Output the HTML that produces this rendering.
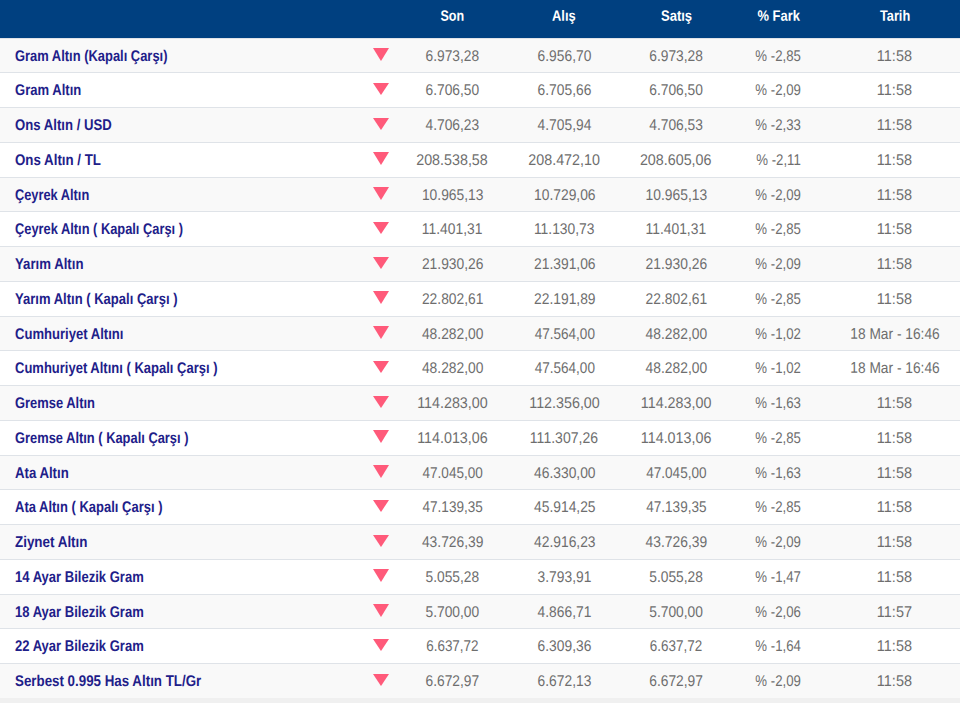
<!DOCTYPE html>
<html lang="tr">
<head>
<meta charset="utf-8">
<title>Altın Fiyatları</title>
<style>
  html, body { margin: 0; padding: 0; }
  body {
    width: 960px; height: 703px; overflow: hidden;
    background: #f0f0f0;
    font-family: "Liberation Sans", sans-serif;
  }
  table.gold {
    width: 960px; table-layout: fixed;
    border-collapse: separate; border-spacing: 0;
  }
  .gold th, .gold td {
    box-sizing: border-box; padding: 0; margin: 0;
    vertical-align: top; text-align: center;
    white-space: nowrap; overflow: visible;
  }
  .gold thead th {
    height: 38px; line-height: 20px;
    background: #004080; color: #fff;
    font-size: 15.0px; font-weight: 700;
  }
  .gold tbody td {
    height: 35px; line-height: 20px;
    border-top: 1px solid #dfe3e8;
    background: #ffffff;
    font-size: 15.5px; color: #6e6e6e;
  }
  .gold tbody tr.h34 td { height: 34px; }
  .gold tbody tr:nth-child(odd) td { background: #f9f9f9; }
  .gold tbody td.name {
    text-align: left; padding-left: 15.0px;
    font-size: 15.5px; font-weight: 700; color: #1e2089;
  }
  .gold span {
    display: inline-block; vertical-align: top;
    height: 20px; line-height: 20px; white-space: pre;
    transform: translate(var(--x, 0px), var(--y, 0px)) scaleX(var(--s, 1)) rotate(0.03deg);
  }
  .gold td.name span { transform-origin: 0 50%; --y: 7.00px; }
  .gold td.num span { --y: 6.90px; }
  .gold th span { --y: 5.65px; }
  .gold td.dir { position: relative; }
  .gold td.dir svg { position: absolute; left: 33px; display: block; width: 16px; }
  .gold td.dir svg polygon { fill: #ff5a7a; }
</style>
</head>
<body>
<table class="gold">
<colgroup><col style="width:340px"><col style="width:56px"><col style="width:112px"><col style="width:112px"><col style="width:112px"><col style="width:94px"><col style="width:134px"></colgroup>
<thead>
<tr>
<th></th>
<th></th>
<th><span style="--s:0.8362;--x:0.10px">Son</span></th>
<th><span style="--s:0.8613;--x:0.10px">Alış</span></th>
<th><span style="--s:0.8701;--x:0.60px">Satış</span></th>
<th><span style="--s:0.8617;--x:0.10px">% Fark</span></th>
<th><span style="--s:0.8520;--x:2.30px">Tarih</span></th>
</tr>
</thead>
<tbody>
<tr class="h34">
<td class="name"><span style="--s:0.8338">Gram Altın (Kapalı Çarşı)</span></td>
<td class="dir"><svg style="top:9px;height:13.05px" viewBox="0 0 16 13.05" preserveAspectRatio="none" aria-hidden="true"><polygon points="0,0 16,0 8,13.05"/></svg></td>
<td class="num"><span style="--s:0.8900;--x:0.20px">6.973,28</span></td>
<td class="num"><span style="--s:0.8900;--x:0.30px">6.956,70</span></td>
<td class="num"><span style="--s:0.8900;--x:-0.10px">6.973,28</span></td>
<td class="num"><span style="--s:0.8530;--x:-0.60px">% -2,85</span></td>
<td class="num"><span style="--s:0.9330;--x:1.60px">11:58</span></td>
</tr>
<tr>
<td class="name"><span style="--s:0.8421">Gram Altın</span></td>
<td class="dir"><svg style="top:10px;height:12.05px" viewBox="0 0 16 12.05" preserveAspectRatio="none" aria-hidden="true"><polygon points="0,0 16,0 8,12.05"/></svg></td>
<td class="num"><span style="--s:0.8900;--x:0.20px">6.706,50</span></td>
<td class="num"><span style="--s:0.8900;--x:0.30px">6.705,66</span></td>
<td class="num"><span style="--s:0.8900;--x:-0.10px">6.706,50</span></td>
<td class="num"><span style="--s:0.8530;--x:-0.60px">% -2,09</span></td>
<td class="num"><span style="--s:0.9330;--x:1.60px">11:58</span></td>
</tr>
<tr>
<td class="name"><span style="--s:0.8489">Ons Altın / USD</span></td>
<td class="dir"><svg style="top:10px;height:12.05px" viewBox="0 0 16 12.05" preserveAspectRatio="none" aria-hidden="true"><polygon points="0,0 16,0 8,12.05"/></svg></td>
<td class="num"><span style="--s:0.8900;--x:0.20px">4.706,23</span></td>
<td class="num"><span style="--s:0.8900;--x:0.30px">4.705,94</span></td>
<td class="num"><span style="--s:0.8900;--x:-0.10px">4.706,53</span></td>
<td class="num"><span style="--s:0.8530;--x:-0.60px">% -2,33</span></td>
<td class="num"><span style="--s:0.9330;--x:1.60px">11:58</span></td>
</tr>
<tr>
<td class="name"><span style="--s:0.8585">Ons Altın / TL</span></td>
<td class="dir"><svg style="top:9px;height:13.05px" viewBox="0 0 16 13.05" preserveAspectRatio="none" aria-hidden="true"><polygon points="0,0 16,0 8,13.05"/></svg></td>
<td class="num"><span style="--s:0.9230;--x:0.20px">208.538,58</span></td>
<td class="num"><span style="--s:0.9230;--x:0.30px">208.472,10</span></td>
<td class="num"><span style="--s:0.9230;--x:-0.10px">208.605,06</span></td>
<td class="num"><span style="--s:0.8530;--x:-0.60px">% -2,11</span></td>
<td class="num"><span style="--s:0.9330;--x:1.60px">11:58</span></td>
</tr>
<tr class="h34">
<td class="name"><span style="--s:0.8261">Çeyrek Altın</span></td>
<td class="dir"><svg style="top:9px;height:13.05px" viewBox="0 0 16 13.05" preserveAspectRatio="none" aria-hidden="true"><polygon points="0,0 16,0 8,13.05"/></svg></td>
<td class="num"><span style="--s:0.8930;--x:0.20px">10.965,13</span></td>
<td class="num"><span style="--s:0.8930;--x:0.30px">10.729,06</span></td>
<td class="num"><span style="--s:0.8930;--x:-0.10px">10.965,13</span></td>
<td class="num"><span style="--s:0.8530;--x:-0.60px">% -2,09</span></td>
<td class="num"><span style="--s:0.9330;--x:1.60px">11:58</span></td>
</tr>
<tr>
<td class="name"><span style="--s:0.8287">Çeyrek Altın ( Kapalı Çarşı )</span></td>
<td class="dir"><svg style="top:10px;height:12.05px" viewBox="0 0 16 12.05" preserveAspectRatio="none" aria-hidden="true"><polygon points="0,0 16,0 8,12.05"/></svg></td>
<td class="num"><span style="--s:0.8930;--x:0.20px">11.401,31</span></td>
<td class="num"><span style="--s:0.8930;--x:0.30px">11.130,73</span></td>
<td class="num"><span style="--s:0.8930;--x:-0.10px">11.401,31</span></td>
<td class="num"><span style="--s:0.8530;--x:-0.60px">% -2,85</span></td>
<td class="num"><span style="--s:0.9330;--x:1.60px">11:58</span></td>
</tr>
<tr>
<td class="name"><span style="--s:0.8519">Yarım Altın</span></td>
<td class="dir"><svg style="top:10px;height:12.05px" viewBox="0 0 16 12.05" preserveAspectRatio="none" aria-hidden="true"><polygon points="0,0 16,0 8,12.05"/></svg></td>
<td class="num"><span style="--s:0.8930;--x:0.20px">21.930,26</span></td>
<td class="num"><span style="--s:0.8930;--x:0.30px">21.391,06</span></td>
<td class="num"><span style="--s:0.8930;--x:-0.10px">21.930,26</span></td>
<td class="num"><span style="--s:0.8530;--x:-0.60px">% -2,09</span></td>
<td class="num"><span style="--s:0.9330;--x:1.60px">11:58</span></td>
</tr>
<tr>
<td class="name"><span style="--s:0.8409">Yarım Altın ( Kapalı Çarşı )</span></td>
<td class="dir"><svg style="top:9px;height:13.05px" viewBox="0 0 16 13.05" preserveAspectRatio="none" aria-hidden="true"><polygon points="0,0 16,0 8,13.05"/></svg></td>
<td class="num"><span style="--s:0.8930;--x:0.20px">22.802,61</span></td>
<td class="num"><span style="--s:0.8930;--x:0.30px">22.191,89</span></td>
<td class="num"><span style="--s:0.8930;--x:-0.10px">22.802,61</span></td>
<td class="num"><span style="--s:0.8530;--x:-0.60px">% -2,85</span></td>
<td class="num"><span style="--s:0.9330;--x:1.60px">11:58</span></td>
</tr>
<tr class="h34">
<td class="name"><span style="--s:0.8436">Cumhuriyet Altını</span></td>
<td class="dir"><svg style="top:9px;height:13.05px" viewBox="0 0 16 13.05" preserveAspectRatio="none" aria-hidden="true"><polygon points="0,0 16,0 8,13.05"/></svg></td>
<td class="num"><span style="--s:0.8930;--x:0.20px">48.282,00</span></td>
<td class="num"><span style="--s:0.8742;--x:0.30px">47.564,00</span></td>
<td class="num"><span style="--s:0.8930;--x:-0.10px">48.282,00</span></td>
<td class="num"><span style="--s:0.8530;--x:-0.60px">% -1,02</span></td>
<td class="num"><span style="--s:0.8870;--x:1.60px">18 Mar - 16:46</span></td>
</tr>
<tr>
<td class="name"><span style="--s:0.8387">Cumhuriyet Altını ( Kapalı Çarşı )</span></td>
<td class="dir"><svg style="top:10px;height:12.05px" viewBox="0 0 16 12.05" preserveAspectRatio="none" aria-hidden="true"><polygon points="0,0 16,0 8,12.05"/></svg></td>
<td class="num"><span style="--s:0.8930;--x:0.20px">48.282,00</span></td>
<td class="num"><span style="--s:0.8742;--x:0.30px">47.564,00</span></td>
<td class="num"><span style="--s:0.8930;--x:-0.10px">48.282,00</span></td>
<td class="num"><span style="--s:0.8530;--x:-0.60px">% -1,02</span></td>
<td class="num"><span style="--s:0.8870;--x:1.60px">18 Mar - 16:46</span></td>
</tr>
<tr>
<td class="name"><span style="--s:0.8341">Gremse Altın</span></td>
<td class="dir"><svg style="top:10px;height:12.05px" viewBox="0 0 16 12.05" preserveAspectRatio="none" aria-hidden="true"><polygon points="0,0 16,0 8,12.05"/></svg></td>
<td class="num"><span style="--s:0.9230;--x:0.20px">114.283,00</span></td>
<td class="num"><span style="--s:0.9230;--x:0.30px">112.356,00</span></td>
<td class="num"><span style="--s:0.9230;--x:-0.10px">114.283,00</span></td>
<td class="num"><span style="--s:0.8530;--x:-0.60px">% -1,63</span></td>
<td class="num"><span style="--s:0.9330;--x:1.60px">11:58</span></td>
</tr>
<tr>
<td class="name"><span style="--s:0.8311">Gremse Altın ( Kapalı Çarşı )</span></td>
<td class="dir"><svg style="top:9px;height:13.05px" viewBox="0 0 16 13.05" preserveAspectRatio="none" aria-hidden="true"><polygon points="0,0 16,0 8,13.05"/></svg></td>
<td class="num"><span style="--s:0.9230;--x:0.20px">114.013,06</span></td>
<td class="num"><span style="--s:0.9057;--x:0.30px">111.307,26</span></td>
<td class="num"><span style="--s:0.9230;--x:-0.10px">114.013,06</span></td>
<td class="num"><span style="--s:0.8530;--x:-0.60px">% -2,85</span></td>
<td class="num"><span style="--s:0.9330;--x:1.60px">11:58</span></td>
</tr>
<tr class="h34">
<td class="name"><span style="--s:0.8511">Ata Altın</span></td>
<td class="dir"><svg style="top:9px;height:13.05px" viewBox="0 0 16 13.05" preserveAspectRatio="none" aria-hidden="true"><polygon points="0,0 16,0 8,13.05"/></svg></td>
<td class="num"><span style="--s:0.8742;--x:0.20px">47.045,00</span></td>
<td class="num"><span style="--s:0.8930;--x:0.30px">46.330,00</span></td>
<td class="num"><span style="--s:0.8742;--x:-0.10px">47.045,00</span></td>
<td class="num"><span style="--s:0.8530;--x:-0.60px">% -1,63</span></td>
<td class="num"><span style="--s:0.9330;--x:1.60px">11:58</span></td>
</tr>
<tr>
<td class="name"><span style="--s:0.8381">Ata Altın ( Kapalı Çarşı )</span></td>
<td class="dir"><svg style="top:10px;height:12.05px" viewBox="0 0 16 12.05" preserveAspectRatio="none" aria-hidden="true"><polygon points="0,0 16,0 8,12.05"/></svg></td>
<td class="num"><span style="--s:0.8742;--x:0.20px">47.139,35</span></td>
<td class="num"><span style="--s:0.8930;--x:0.30px">45.914,25</span></td>
<td class="num"><span style="--s:0.8742;--x:-0.10px">47.139,35</span></td>
<td class="num"><span style="--s:0.8530;--x:-0.60px">% -2,85</span></td>
<td class="num"><span style="--s:0.9330;--x:1.60px">11:58</span></td>
</tr>
<tr>
<td class="name"><span style="--s:0.8650">Ziynet Altın</span></td>
<td class="dir"><svg style="top:10px;height:12.05px" viewBox="0 0 16 12.05" preserveAspectRatio="none" aria-hidden="true"><polygon points="0,0 16,0 8,12.05"/></svg></td>
<td class="num"><span style="--s:0.8930;--x:0.20px">43.726,39</span></td>
<td class="num"><span style="--s:0.8930;--x:0.30px">42.916,23</span></td>
<td class="num"><span style="--s:0.8930;--x:-0.10px">43.726,39</span></td>
<td class="num"><span style="--s:0.8530;--x:-0.60px">% -2,09</span></td>
<td class="num"><span style="--s:0.9330;--x:1.60px">11:58</span></td>
</tr>
<tr>
<td class="name"><span style="--s:0.8411">14 Ayar Bilezik Gram</span></td>
<td class="dir"><svg style="top:9px;height:13.05px" viewBox="0 0 16 13.05" preserveAspectRatio="none" aria-hidden="true"><polygon points="0,0 16,0 8,13.05"/></svg></td>
<td class="num"><span style="--s:0.8900;--x:0.20px">5.055,28</span></td>
<td class="num"><span style="--s:0.8900;--x:0.30px">3.793,91</span></td>
<td class="num"><span style="--s:0.8900;--x:-0.10px">5.055,28</span></td>
<td class="num"><span style="--s:0.8530;--x:-0.60px">% -1,47</span></td>
<td class="num"><span style="--s:0.9330;--x:1.60px">11:58</span></td>
</tr>
<tr class="h34">
<td class="name"><span style="--s:0.8411">18 Ayar Bilezik Gram</span></td>
<td class="dir"><svg style="top:9px;height:13.05px" viewBox="0 0 16 13.05" preserveAspectRatio="none" aria-hidden="true"><polygon points="0,0 16,0 8,13.05"/></svg></td>
<td class="num"><span style="--s:0.8900;--x:0.20px">5.700,00</span></td>
<td class="num"><span style="--s:0.8900;--x:0.30px">4.866,71</span></td>
<td class="num"><span style="--s:0.8900;--x:-0.10px">5.700,00</span></td>
<td class="num"><span style="--s:0.8530;--x:-0.60px">% -2,06</span></td>
<td class="num"><span style="--s:0.9330;--x:1.60px">11:57</span></td>
</tr>
<tr>
<td class="name"><span style="--s:0.8411">22 Ayar Bilezik Gram</span></td>
<td class="dir"><svg style="top:10px;height:12.05px" viewBox="0 0 16 12.05" preserveAspectRatio="none" aria-hidden="true"><polygon points="0,0 16,0 8,12.05"/></svg></td>
<td class="num"><span style="--s:0.8685;--x:0.20px">6.637,72</span></td>
<td class="num"><span style="--s:0.8900;--x:0.30px">6.309,36</span></td>
<td class="num"><span style="--s:0.8685;--x:-0.10px">6.637,72</span></td>
<td class="num"><span style="--s:0.8530;--x:-0.60px">% -1,64</span></td>
<td class="num"><span style="--s:0.9330;--x:1.60px">11:58</span></td>
</tr>
<tr>
<td class="name"><span style="--s:0.8602">Serbest 0.995 Has Altın TL/Gr</span></td>
<td class="dir"><svg style="top:10px;height:12.05px" viewBox="0 0 16 12.05" preserveAspectRatio="none" aria-hidden="true"><polygon points="0,0 16,0 8,12.05"/></svg></td>
<td class="num"><span style="--s:0.8900;--x:0.20px">6.672,97</span></td>
<td class="num"><span style="--s:0.8900;--x:0.30px">6.672,13</span></td>
<td class="num"><span style="--s:0.8900;--x:-0.10px">6.672,97</span></td>
<td class="num"><span style="--s:0.8530;--x:-0.60px">% -2,09</span></td>
<td class="num"><span style="--s:0.9330;--x:1.60px">11:58</span></td>
</tr>
</tbody>
</table>
</body>
</html>
